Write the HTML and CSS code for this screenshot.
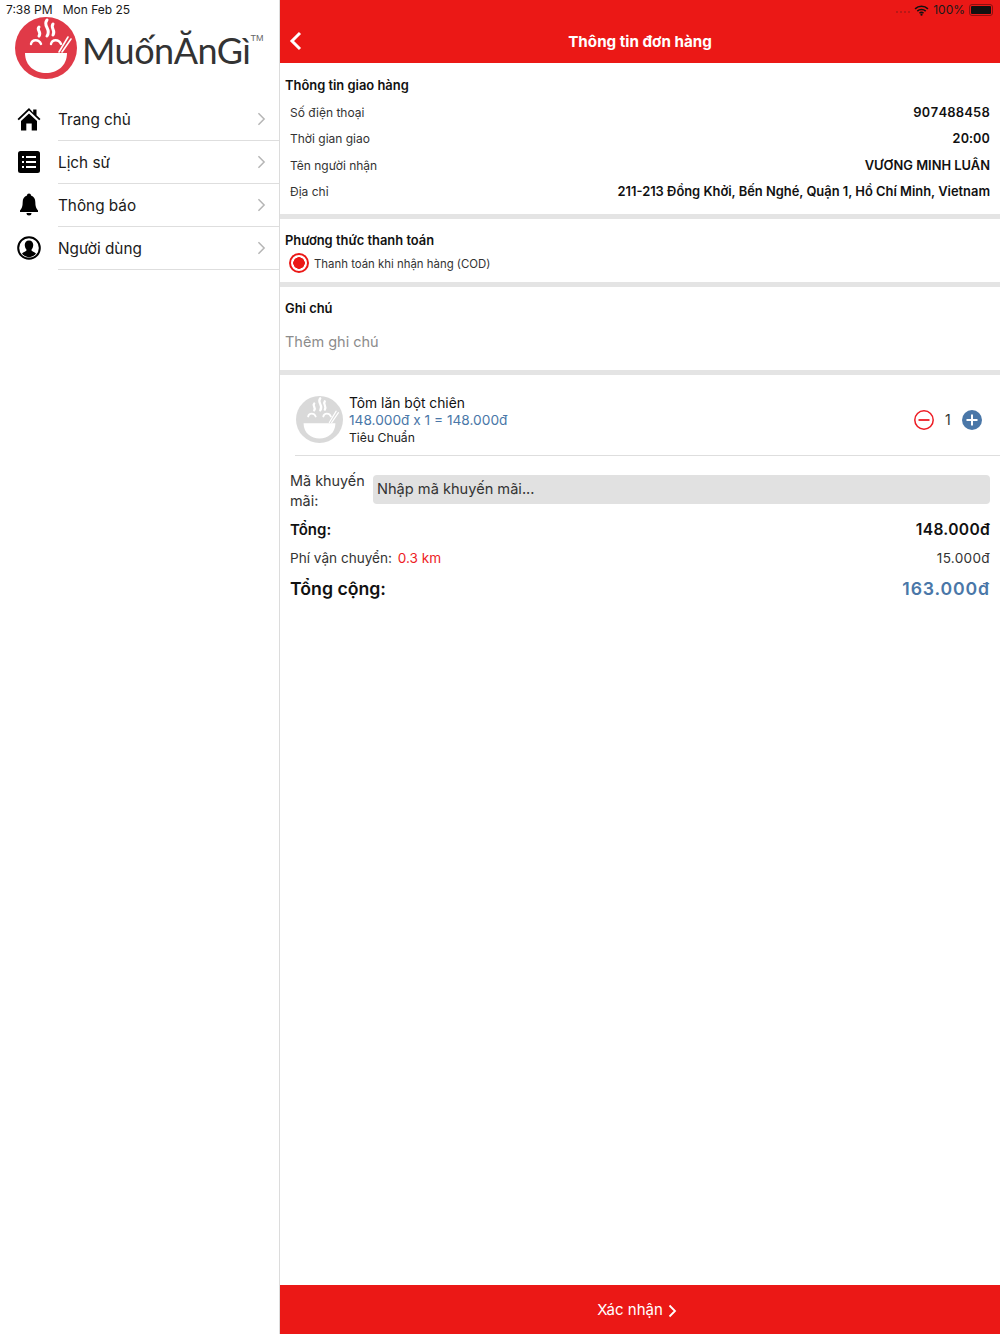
FILE: index.html
```html
<!DOCTYPE html>
<html lang="vi">
<head>
<meta charset="utf-8">
<title>Thông tin đơn hàng</title>
<link rel="stylesheet" href="styles.css">
</head>
<body>
<div class="app">
  <aside class="sidebar">
    <div class="logo">
      <svg class="logo-mark" viewBox="0 0 62 62" width="62" height="62">
        <circle cx="31" cy="31" r="31" fill="#e03a48"/>
        <path d="M10 36H52C52 49 42 56 31 56S10 49 10 36Z" fill="#fff"/>
        <path d="M24 10c-3 3 3 5 0 9M32 3c-5 6 5 9 0 16M38 7c-3 4 3 6 0 11" fill="none" stroke="#fff" stroke-width="3" stroke-linecap="round"/>
        <path d="M16 27c1-5 8-5 10 0M36 27c1-5 8-5 10 0" fill="none" stroke="#fff" stroke-width="2.400" stroke-linecap="round"/>
        <path d="M44 35 53 20M47 35 56 22" fill="none" stroke="#fff" stroke-width="1.600" stroke-linecap="round"/>
      </svg>
      <span class="logo-text">MuốnĂnGì</span><span class="logo-tm">TM</span>
    </div>
    <nav class="menu">
      <a class="menu-item">
        <svg class="menu-icon" viewBox="0 0 24 24"><path d="M12 1 0.500 12l1.300 1.300L12 3.600l10.200 9.700 1.300-1.300-4-3.800V2.500h-3.300v3.300Z M4 14 12 6.400 20 14V23.500H14.700V16.500H9.300v7H4Z" fill="#000"/></svg>
        <span class="menu-label">Trang chủ</span>
        <svg class="chevron" viewBox="0 0 10 16"><path d="M1.500 1.500 8 8l-6.500 6.500" fill="none" stroke="#b5b5b5" stroke-width="1.700"/></svg>
      </a>
      <a class="menu-item">
        <svg class="menu-icon" viewBox="0 0 24 24"><rect x="1" y="1" width="22" height="22" rx="2.500" fill="#000"/><path d="M5 7h2M9 7h10M5 12h2M9 12h10M5 17h2M9 17h10" stroke="#fff" stroke-width="1.800"/></svg>
        <span class="menu-label">Lịch sử</span>
        <svg class="chevron" viewBox="0 0 10 16"><path d="M1.500 1.500 8 8l-6.500 6.500" fill="none" stroke="#b5b5b5" stroke-width="1.700"/></svg>
      </a>
      <a class="menu-item">
        <svg class="menu-icon" viewBox="0 0 24 24"><path d="M12 0.500c1.200 0 2 .8 2 1.900 3 .9 4.300 3.400 4.300 6.600 0 4.500 1 6.500 2.700 8.500v1.500H3V17.500C4.700 15.500 5.700 13.500 5.700 9c0-3.200 1.300-5.700 4.300-6.600 0-1.100.8-1.900 2-1.900Z M9.500 20h5a2.500 2.500 0 0 1-5 0Z" fill="#000"/></svg>
        <span class="menu-label">Thông báo</span>
        <svg class="chevron" viewBox="0 0 10 16"><path d="M1.500 1.500 8 8l-6.500 6.500" fill="none" stroke="#b5b5b5" stroke-width="1.700"/></svg>
      </a>
      <a class="menu-item">
        <svg class="menu-icon" viewBox="0 0 24 24"><circle cx="12" cy="12" r="10.800" fill="#fff" stroke="#000" stroke-width="2"/><path d="M12 4.500c3 0 4.500 2.300 4.200 5-.2 1.800-.8 3.200-1.700 4.200-.3 1.500 3 2 4.500 3.800A9.500 9.500 0 0 1 12 21.500a9.500 9.500 0 0 1-7-4c1.500-1.800 4.800-2.300 4.500-3.800-.9-1-1.500-2.400-1.700-4.200-.3-2.700 1.200-5 4.200-5Z" fill="#000"/></svg>
        <span class="menu-label">Người dùng</span>
        <svg class="chevron" viewBox="0 0 10 16"><path d="M1.500 1.500 8 8l-6.500 6.500" fill="none" stroke="#b5b5b5" stroke-width="1.700"/></svg>
      </a>
    </nav>
  </aside>

  <main class="main">
    <header class="topbar">
      <svg class="back" viewBox="0 0 13 20"><path d="M11 2 3 10l8 8" fill="none" stroke="#fff" stroke-width="3"/></svg>
      <h1 class="title">Thông tin đơn hàng</h1>
    </header>

    <div class="content">
      <section class="section delivery">
        <h2 class="section-title">Thông tin giao hàng</h2>
        <div class="info-row"><span>Số điện thoại</span><b class="wide">907488458</b></div>
        <div class="info-row"><span>Thời gian giao</span><b class="wide">20:00</b></div>
        <div class="info-row"><span>Tên người nhận</span><b>VƯƠNG MINH LUÂN</b></div>
        <div class="info-row"><span>Địa chỉ</span><b>211-213 Đồng Khởi, Bến Nghé, Quận 1, Hồ Chí Minh, Vietnam</b></div>
      </section>

      <section class="section payment">
        <h2 class="section-title">Phương thức thanh toán</h2>
        <div class="radio-row"><span class="radio"></span><span class="radio-label">Thanh toán khi nhận hàng (COD)</span></div>
      </section>

      <section class="section note">
        <h2 class="section-title">Ghi chú</h2>
        <div class="note-input">Thêm ghi chú</div>
      </section>

      <section class="item">
        <svg class="item-thumb" viewBox="0 0 62 62">
          <circle cx="31" cy="31" r="31" fill="#d9d9d9"/>
          <path d="M10 36H52C52 49 42 56 31 56S10 49 10 36Z" fill="#fff"/>
          <path d="M24 10c-3 3 3 5 0 9M32 3c-5 6 5 9 0 16M38 7c-3 4 3 6 0 11" fill="none" stroke="#fff" stroke-width="3" stroke-linecap="round"/>
          <path d="M16 27c1-5 8-5 10 0M36 27c1-5 8-5 10 0" fill="none" stroke="#fff" stroke-width="2.400" stroke-linecap="round"/>
          <path d="M44 35 53 20M47 35 56 22" fill="none" stroke="#fff" stroke-width="1.600" stroke-linecap="round"/>
        </svg>
        <div class="item-body">
          <div class="item-name">Tôm lăn bột chiên</div>
          <div class="item-price">148.000đ x 1 = 148.000đ</div>
          <div class="item-size">Tiêu Chuẩn</div>
        </div>
        <div class="qty">
          <svg class="qty-btn" viewBox="0 0 20 20"><circle cx="10" cy="10" r="9.200" fill="none" stroke="#ed1c24" stroke-width="1.500"/><path d="M4.500 10h11" stroke="#ed1c24" stroke-width="1.800"/></svg>
          <span class="qty-num">1</span>
          <svg class="qty-btn" viewBox="0 0 20 20"><circle cx="10" cy="10" r="10" fill="#4a77a8"/><path d="M4.500 10h11M10 4.500v11" stroke="#fff" stroke-width="2"/></svg>
        </div>
      </section>

      <section class="summary">
        <div class="promo">
          <label class="promo-label">Mã khuyến mãi:</label>
          <div class="promo-input">Nhập mã khuyến mãi...</div>
        </div>
        <div class="sum-row sum-sub"><b>Tổng:</b><b class="sub-value">148.000đ</b></div>
        <div class="sum-row sum-ship"><span>Phí vận chuyển: <em class="distance">0.3 km</em></span><span class="ship-value">15.000đ</span></div>
        <div class="sum-row sum-total"><b>Tổng cộng:</b><b class="total-value">163.000đ</b></div>
      </section>
    </div>

    <footer class="confirm">
      <span>Xác nhận</span>
      <svg class="confirm-arrow" viewBox="0 0 9 14"><path d="M1.500 1.500 7 7l-5.500 5.500" fill="none" stroke="#fff" stroke-width="1.800"/></svg>
    </footer>
  </main>

  <div class="status status-left">7:38 PM&nbsp;&nbsp; Mon Feb 25</div>
  <div class="status status-right">
    <span class="signal"><i></i><i></i><i></i><i></i></span>
    <svg class="wifi" viewBox="0 0 16 12"><path d="M1 4.200a10 10 0 0 1 14 0M3.400 6.700a6.600 6.600 0 0 1 9.200 0M5.800 9a3.200 3.200 0 0 1 4.400 0" fill="none" stroke="#111" stroke-width="1.700"/><circle cx="8" cy="10.600" r="1.200" fill="#111"/></svg>
    <span>100%</span>
    <span class="battery"><span class="battery-fill"></span></span>
  </div>
</div>
</body>
</html>
```

FILE: styles.css
```css
* { box-sizing: border-box; }
html, body { margin: 0; padding: 0; }
body {
  width: 1000px;
  height: 1334px;
  overflow: hidden;
  background: #fff;
  font-family: Inter, "Liberation Sans", sans-serif;
  color: #111;
}
.app { position: relative; display: flex; width: 1000px; height: 1334px; }

.sidebar {
  width: 280px;
  flex: none;
  border-right: 1px solid #dcdcdc;
  padding-top: 16px;
}
.logo { display: flex; align-items: flex-start; height: 82px; padding-left: 15px; color: #333; }
.logo-mark { flex: none; margin-top: 1px; }
.logo-text {
  font-family: Lato, sans-serif;
  font-size: 36px;
  line-height: 62px;
  margin: 3px 0 0 5px;
  letter-spacing: -0.5px;
  white-space: nowrap;
}
.logo-tm { font-family: "Liberation Sans", sans-serif; font-size: 9px; line-height: 12px; margin: 16px 0 0 0; color: #666; }
.menu-item { position: relative; display: flex; align-items: center; height: 43px; padding-left: 17px; }
.menu-item::after {
  content: "";
  position: absolute;
  left: 58px;
  right: 0;
  bottom: 0;
  height: 1px;
  background: #dedede;
}
.menu-icon { width: 24px; height: 24px; flex: none; margin-bottom: 2px; }
.menu-label {
  flex: 1;
  margin-left: 17px;
  padding-bottom: 1px;
  font-size: 15.300px;
  color: #1a1a1a;
}
.chevron { width: 9px; height: 14px; margin: 0 13px 2px 0; flex: none; }

.main { flex: 1; display: flex; flex-direction: column; min-width: 0; }
.topbar {
  height: 63px;
  flex: none;
  background: #eb1816;
  color: #fff;
  position: relative;
  display: flex;
  align-items: center;
  justify-content: center;
  padding-top: 21px;
}
.back { position: absolute; left: 9px; top: 31px; width: 13px; height: 20px; }
.title { margin: 0; font-size: 15.200px; font-weight: 700; line-height: 20px; }

.content { flex: 1; }
.section { border-bottom: 5px solid #e4e4e4; }
.section-title { margin: 0; font-size: 12.900px; font-weight: 600; line-height: 18px; color: #111; }
.delivery { height: 156px; padding: 14px 10px 0 5px; }
.delivery .section-title { margin-bottom: 5px; }
.info-row {
  display: flex;
  justify-content: space-between;
  height: 26.300px;
  line-height: 26px;
  padding-left: 5px;
  font-size: 12px;
  color: #333;
}
.info-row b { font-size: 12.900px; font-weight: 600; color: #111; }
.info-row .wide { font-variant-numeric: tabular-nums; letter-spacing: 0.2px; }
.payment { height: 68px; padding: 13px 10px 0 5px; }
.radio-row { display: flex; align-items: center; gap: 5px; margin-top: 3px; padding-left: 4px; font-size: 11.400px; color: #333; height: 20px; }
.radio {
  width: 20px;
  height: 20px;
  border: 2px solid #eb1816;
  border-radius: 50%;
  background: radial-gradient(circle, #eb1816 0 5.500px, #fff 6px);
}
.radio-label { padding-top: 1px; }
.note { height: 88px; padding: 13px 10px 0 5px; }
.note-input { margin-top: 14px; font-size: 14.500px; line-height: 20px; color: #8c8c8c; }

.item { position: relative; display: flex; align-items: center; height: 81px; padding: 10px 18px 0 16px; }
.item::after { content: ""; position: absolute; left: 15px; right: 0; bottom: 0; height: 1px; background: #dedede; }
.item-thumb { width: 47px; height: 47px; flex: none; margin-top: -2px; }
.item-body { flex: 1; margin-left: 6px; font-size: 13.800px; line-height: 17.500px; }
.item-name { margin: 1px 0 -1px; }
.item-price { font-size: 13.700px; color: #4a77a8; }
.item-size { font-size: 12.200px; color: #222; }
.qty { display: flex; align-items: center; gap: 11px; margin-top: -2px; }
.qty-btn { width: 20px; height: 20px; flex: none; }
.qty-num { font-size: 14px; color: #333; width: 6px; }

.summary { padding: 15px 10px 0; }
.promo { display: flex; align-items: center; gap: 5px; }
.promo-label { width: 78px; flex: none; font-size: 14.400px; line-height: 20px; color: #333; }
.promo-input {
  flex: 1;
  height: 29px;
  margin-bottom: 3px;
  background: #e1e1e1;
  border-radius: 4px;
  padding: 0 4px;
  font-size: 14.600px;
  line-height: 29px;
  color: #333;
}
.sum-row { display: flex; justify-content: space-between; align-items: center; }
.sum-sub { margin-top: 4px; height: 28px; font-size: 15px; }
.sum-sub b { font-weight: 600; }
.sub-value { font-size: 15.600px; letter-spacing: 0.3px; }
.sum-ship { height: 29px; font-size: 13.600px; color: #333; }
.ship-value { letter-spacing: 0.3px; }
.distance { font-style: normal; color: #ed1c24; margin-left: 2px; }
.sum-total { height: 33px; font-size: 17.700px; }
.sum-total b { font-weight: 600; }
.total-value { color: #4a77a8; letter-spacing: 0.85px; }

.confirm {
  height: 49px;
  flex: none;
  background: #eb1816;
  color: #fff;
  display: flex;
  align-items: center;
  justify-content: center;
  gap: 5px;
  padding-right: 6px;
  font-size: 15px;
}
.confirm-arrow { width: 9px; height: 14px; margin-top: 2px; }

.status { position: absolute; top: 0; height: 20px; line-height: 20px; font-size: 12px; color: #1a1a1a; white-space: nowrap; }
.status-left { left: 6px; }
.status-right { right: 7px; display: flex; align-items: center; gap: 4px; }
.signal { display: flex; gap: 1.500px; }
.signal i { width: 2.500px; height: 2.500px; border-radius: 50%; background: #a81818; margin-top: 4px; }
.wifi { width: 15px; height: 11px; }
.battery { width: 24px; height: 12px; border: 1px solid #8c1010; border-radius: 3px; padding: 1px; display: flex; }
.battery-fill { flex: 1; background: #111; border-radius: 1px; }
```
